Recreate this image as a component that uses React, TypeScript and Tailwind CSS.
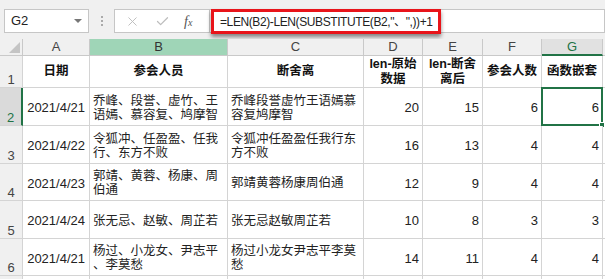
import { Check, X } from "lucide-react";

const COL_W = ["w-[67px]", "w-[138px]", "w-[136px]", "w-[59px]", "w-[60px]", "w-[59px]", "w-[61px]"];
const LETTERS = ["A", "B", "C", "D", "E", "F", "G"];
const ROW_H: Record<number, string> = { 32: "h-[32px]", 37: "h-[37px]", 38: "h-[38px]" };

const SANS = "font-['Liberation_Sans',Arial,sans-serif]";
const CJK = "font-['Liberation_Sans','Noto_Sans_CJK_SC',sans-serif]";

interface Fila {
  num: number;
  h: number;
  fecha: string;
  b: string[];
  c: string[];
  d: number;
  e: number;
  f: number;
  g: number;
}

const FILAS: Fila[] = [
  { num: 2, h: 38, fecha: "2021/4/21", b: ["乔峰、段誉、虚竹、王", "语嫣、慕容复、鸠摩智"], c: ["乔峰段誉虚竹王语嫣慕", "容复鸠摩智"], d: 20, e: 15, f: 6, g: 6 },
  { num: 3, h: 38, fecha: "2021/4/22", b: ["令狐冲、任盈盈、任我", "行、东方不败"], c: ["令狐冲任盈盈任我行东", "方不败"], d: 16, e: 13, f: 4, g: 4 },
  { num: 4, h: 37, fecha: "2021/4/23", b: ["郭靖、黄蓉、杨康、周", "伯通"], c: ["郭靖黄蓉杨康周伯通"], d: 12, e: 9, f: 4, g: 4 },
  { num: 5, h: 38, fecha: "2021/4/24", b: ["张无忌、赵敏、周芷若"], c: ["张无忌赵敏周芷若"], d: 10, e: 8, f: 3, g: 3 },
  { num: 6, h: 37, fecha: "2021/4/21", b: ["杨过、小龙女、尹志平", "、李莫愁"], c: ["杨过小龙女尹志平李莫", "愁"], d: 14, e: 11, f: 4, g: 4 },
];

// ── Barra de fórmulas ─────────────────────────────────────────────────────────

function BarraFormula() {
  return (
    <div className="flex h-[39px] shrink-0 items-start bg-[#f0f0f0] pt-[9px]">
      {/* Cuadro de nombre */}
      <div className="ml-[4px] flex h-[24px] w-[85px] items-center justify-between border border-[#c6c6c6] bg-white pl-[6px] pr-[6px]">
        <span className={`${SANS} text-[13px] text-[#222]`}>G2</span>
        <span className="h-0 w-0 border-x-[4px] border-t-[4px] border-x-transparent border-t-[#777]" />
      </div>

      {/* Separador de puntos */}
      <div className="flex w-[25px] flex-col items-center gap-[2px] pt-[7px]">
        <span className="h-[2px] w-[2px] bg-[#aaa]" />
        <span className="h-[2px] w-[2px] bg-[#aaa]" />
        <span className="h-[2px] w-[2px] bg-[#aaa]" />
      </div>

      {/* Cancelar / aceptar / fx */}
      <div className="flex h-[24px] w-[95px] items-center border border-r-0 border-[#c6c6c6] bg-white pl-[10px]">
        <X className="h-[15px] w-[15px] text-[#bdbdbd]" strokeWidth={1.5} />
        <Check className="ml-[15px] h-[15px] w-[15px] text-[#bdbdbd]" strokeWidth={2} />
        <span className="ml-[14px] font-['Liberation_Serif',serif] text-[14px] italic text-[#555]">
          f<span className="text-[10px]">x</span>
        </span>
      </div>

      {/* Entrada de fórmula */}
      <div className="flex h-[24px] flex-1 border border-[#c6c6c6] bg-white">
        <div className="-mt-[1px] ml-[1px] flex h-[25px] w-[230px] items-center border-[3px] border-[#e8141a] pl-[6px] shadow-[0_3px_4px_rgba(0,0,0,0.45)]">
          <span className={`${CJK} whitespace-nowrap text-[12px] tracking-[-0.4px] text-[#222]`}>
            =LEN(B2)-LEN(SUBSTITUTE(B2,"、",))+1
          </span>
        </div>
      </div>
    </div>
  );
}

// ── Cabecera de columnas ──────────────────────────────────────────────────────

function CabeceraColumnas() {
  return (
    <div className="flex h-[17px] shrink-0 bg-[#f0f0f0]">
      <div className="relative w-[23px] shrink-0 border-b border-r border-[#c9c9c9]">
        <span className="absolute bottom-[2px] right-[2px] h-0 w-0 border-b-[11px] border-l-[11px] border-b-[#c4c4c4] border-l-transparent" />
      </div>
      {LETTERS.map((l, i) => {
        const verde = l === "B";
        const sel = l === "G";
        return (
          <div
            key={l}
            className={`${COL_W[i]} flex shrink-0 items-center justify-center border-r ${SANS} text-[13px] ${
              verde
                ? "border-b border-[#c9c9c9] bg-[#9fd5b7] text-[#333]"
                : sel
                ? "border-b-2 border-r-[#c9c9c9] border-b-[#217346] bg-[#e1e1e1] text-[#217346]"
                : "border-b border-[#c9c9c9] text-[#444]"
            }`}
          >
            {l}
          </div>
        );
      })}
      <div className="flex-1 border-b border-[#c9c9c9]" />
    </div>
  );
}

// ── Fila de encabezados (fila 1) ──────────────────────────────────────────────

function Encabezado({ lineas }: { lineas: string[] }) {
  return (
    <div className="flex flex-col items-center leading-[15px]">
      {lineas.map((t) => (
        <span key={t} className="whitespace-nowrap">
          {t}
        </span>
      ))}
    </div>
  );
}

function FilaTitulos() {
  const titulos = [["日期"], ["参会人员"], ["断舍离"], ["len-原始", "数据"], ["len-断舍", "离后"], ["参会人数"], ["函数嵌套"]];
  return (
    <div className={`flex ${ROW_H[32]} shrink-0`}>
      <div className={`flex w-[23px] shrink-0 items-end justify-center border-b border-r border-[#d4d4d4] bg-[#f0f0f0] ${SANS} text-[13px] leading-[15px] text-[#444]`}>
        1
      </div>
      {titulos.map((t, i) => (
        <div
          key={i}
          className={`${COL_W[i]} flex shrink-0 items-center justify-center border-b border-r border-[#d4d4d4] bg-white ${CJK} text-[12.5px] font-bold text-[#111]`}
        >
          <Encabezado lineas={t} />
        </div>
      ))}
      <div className="flex-1 border-b border-[#d4d4d4] bg-white" />
    </div>
  );
}

// ── Fila de datos ─────────────────────────────────────────────────────────────

function Texto({ lineas }: { lineas: string[] }) {
  return (
    <div className="flex flex-col leading-[14px]">
      {lineas.map((t) => (
        <span key={t} className="whitespace-nowrap">
          {t}
        </span>
      ))}
    </div>
  );
}

function FilaDatos({ fila }: { fila: Fila }) {
  const activa = fila.num === 2;
  const celda = "flex shrink-0 border-b border-r border-[#d4d4d4] bg-white overflow-hidden";
  const numeros = [fila.d, fila.e, fila.f, fila.g];

  return (
    <div className={`flex ${ROW_H[fila.h]} shrink-0`}>
      <div
        className={`flex w-[23px] shrink-0 items-end justify-center border-b border-[#d4d4d4] ${SANS} text-[13px] leading-[15px] ${
          activa ? "border-r-2 border-r-[#217346] bg-[#dadada] text-[#217346]" : "border-r bg-[#f0f0f0] text-[#444]"
        }`}
      >
        {fila.num}
      </div>

      <div className={`${COL_W[0]} ${celda} items-center justify-end pr-[4px] pt-[3px] ${SANS} text-[13px] text-[#222]`}>
        {fila.fecha}
      </div>
      <div className={`${COL_W[1]} ${celda} items-center pl-[3px] pt-[2px] ${CJK} text-[12.5px] text-[#222]`}>
        <Texto lineas={fila.b} />
      </div>
      <div className={`${COL_W[2]} ${celda} items-center pl-[3px] pt-[2px] ${CJK} text-[12.5px] text-[#222]`}>
        <Texto lineas={fila.c} />
      </div>

      {numeros.map((n, i) => (
        <div
          key={i}
          className={`${COL_W[i + 3]} ${celda} relative items-center justify-end pr-[3px] pt-[3px] ${SANS} text-[13px] text-[#222] ${
            activa && i === 3 ? "overflow-visible" : ""
          }`}
        >
          {n}
          {activa && i === 3 && (
            <div className="pointer-events-none absolute -left-[1px] -top-[1px] h-[39px] w-[62px] border-2 border-[#217346]">
              <span className="absolute -bottom-[4px] -right-[4px] h-[6px] w-[6px] border border-white bg-[#217346]" />
            </div>
          )}
        </div>
      ))}
      <div className="flex-1 border-b border-[#d4d4d4] bg-white" />
    </div>
  );
}

function FilaVacia() {
  return (
    <div className="flex h-[20px] shrink-0">
      <div className="w-[23px] shrink-0 border-r border-[#d4d4d4] bg-[#f0f0f0]" />
      {COL_W.map((w) => (
        <div key={w} className={`${w} shrink-0 border-r border-[#d4d4d4] bg-white`} />
      ))}
      <div className="flex-1 bg-white" />
    </div>
  );
}

export default function App() {
  return (
    <div className="flex h-[279px] w-[605px] flex-col overflow-hidden bg-white">
      <BarraFormula />
      <CabeceraColumnas />
      <FilaTitulos />
      {FILAS.map((f) => (
        <FilaDatos key={f.num} fila={f} />
      ))}
      <FilaVacia />
    </div>
  );
}
